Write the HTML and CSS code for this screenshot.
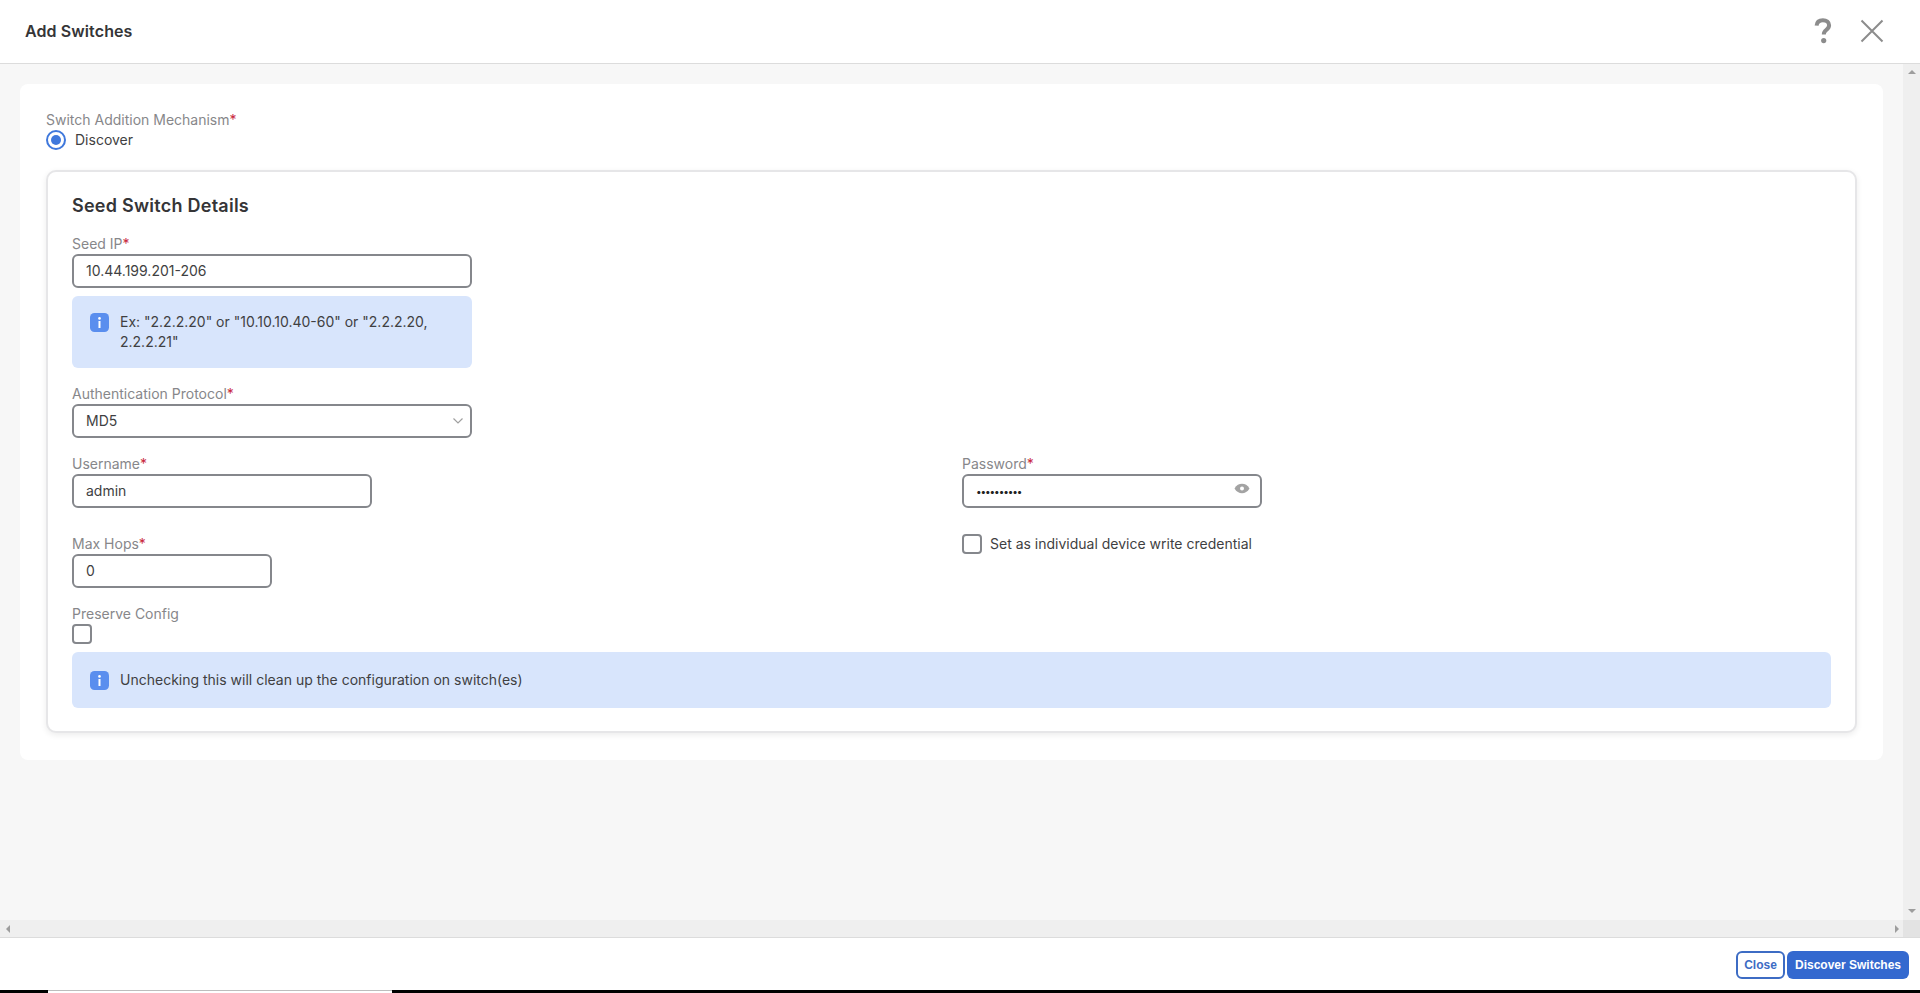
FILE: index.html
```html
<!DOCTYPE html>
<html lang="en">
<head>
<meta charset="utf-8">
<title>Add Switches</title>
<link rel="stylesheet" href="styles.css">
</head>
<body>
<div class="app">
  <header class="header">
    <h1 class="title">Add Switches</h1>
    <div class="header-icons">
      <svg class="icon-help" width="18" height="26" viewBox="0 0 18 26"><path d="M2.600 7.600C2.900 3.900 5.500 2.200 8.900 2.200c3.600 0 6.200 2 6.200 5.100 0 2.400-1.300 3.600-3 4.800-1.500 1.100-2.300 2-2.300 4.300" fill="none" stroke="#8c8c8c" stroke-width="4"/><circle cx="9.700" cy="22.600" r="2.600" fill="#8c8c8c"/></svg>
      <svg class="icon-close" width="24" height="24" viewBox="0 0 24 24"><path d="M1.500 1.500l21 21M22.500 1.500l-21 21" fill="none" stroke="#8c8c8c" stroke-width="2"/></svg>
    </div>
  </header>

  <div class="viewport">
    <main class="content">
      <section class="panel">
        <div class="label">Switch Addition Mechanism<span class="req">*</span></div>
        <div class="radio-row">
          <span class="radio"><span class="radio-dot"></span></span>
          <span class="radio-text">Discover</span>
        </div>

        <section class="card">
          <h2 class="card-title">Seed Switch Details</h2>

          <div class="label">Seed IP<span class="req">*</span></div>
          <div class="input w-400">10.44.199.201-206</div>
          <div class="info info-narrow">
            <svg class="info-icon" width="19" height="19" viewBox="0 0 19 19"><rect width="19" height="19" rx="4.500" fill="#5a8eee"/><circle cx="9.500" cy="5.400" r="1.300" fill="#fff"/><rect x="8.500" y="8" width="2" height="7" fill="#fff"/></svg>
            <span class="info-text">Ex: "2.2.2.20" or "10.10.10.40-60" or "2.2.2.20, 2.2.2.21"</span>
          </div>

          <div class="label gap-16">Authentication Protocol<span class="req">*</span></div>
          <div class="input select w-400">
            <span>MD5</span>
            <svg width="12" height="8" viewBox="0 0 12 8"><path d="M1.500 1.500l4.500 4.500 4.500-4.500" fill="none" stroke="#a0a0a0" stroke-width="1.200"/></svg>
          </div>

          <div class="grid">
            <div class="field">
              <div class="label">Username<span class="req">*</span></div>
              <div class="input w-300">admin</div>
            </div>
            <div class="field">
              <div class="label">Password<span class="req">*</span></div>
              <div class="input password w-300">
                <span class="dots">••••••••••</span>
                <svg width="16" height="11" viewBox="0 0 16 11"><path d="M0.500 5.500C2.500 2.200 5 .8 8 .8s5.500 1.400 7.500 4.700C13.500 8.800 11 10.200 8 10.200S2.500 8.800.5 5.500z" fill="#a3a3a3"/><circle cx="8" cy="5.500" r="2" fill="#fff"/></svg>
              </div>
            </div>
            <div class="field">
              <div class="label">Max Hops<span class="req">*</span></div>
              <div class="input w-200">0</div>
            </div>
            <div class="check-row">
              <span class="check"></span>
              <span class="check-text">Set as individual device write credential</span>
            </div>
          </div>

          <div class="label gap-16">Preserve Config</div>
          <span class="check check-block"></span>
          <div class="info info-wide">
            <svg class="info-icon" width="19" height="19" viewBox="0 0 19 19"><rect width="19" height="19" rx="4.500" fill="#5a8eee"/><circle cx="9.500" cy="5.400" r="1.300" fill="#fff"/><rect x="8.500" y="8" width="2" height="7" fill="#fff"/></svg>
            <span class="info-text">Unchecking this will clean up the configuration on switch(es)</span>
          </div>
        </section>
      </section>
    </main>
    <div class="vscroll">
      <span class="arrow-up"></span>
      <span class="arrow-down"></span>
    </div>
  </div>

  <div class="hscroll">
    <div class="hscroll-track">
      <span class="arrow-left"></span>
      <span class="arrow-right"></span>
    </div>
    <div class="corner"></div>
  </div>

  <footer class="footer">
    <button class="btn btn-outline" type="button">Close</button>
    <button class="btn btn-primary" type="button">Discover Switches</button>
  </footer>

  <div class="taskbar">
    <span class="task-black task-start"></span>
    <span class="task-tab"></span>
    <span class="task-black task-end"></span>
  </div>
</div>
</body>
</html>
```

FILE: styles.css
```css
* { box-sizing: border-box; }
html, body { margin: 0; padding: 0; height: 100%; overflow: hidden; }
body { font-family: Inter, "Liberation Sans", sans-serif; font-size: 14px; color: #3f3f42; background: #fff; }

.app { display: flex; flex-direction: column; height: 993px; }

.header { height: 64px; flex: none; display: flex; align-items: center; justify-content: space-between; padding: 0 36px 2px 25px; border-bottom: 1px solid #dcdcdc; background: #fff; }
.title { margin: 0; font-size: 16px; line-height: 22px; font-weight: 600; letter-spacing: .1px; color: #353537; }
.header-icons { display: flex; align-items: center; gap: 28px; }
.icon-help { display: block; }
.icon-close { display: block; }

.viewport { flex: 1; min-height: 0; display: flex; background: #f7f7f7; }
.content { flex: 1; min-width: 0; padding: 20px 20px 0; }
.panel { background: #fff; border-radius: 8px; padding: 26px 26px 27px; height: 676px; }

.label { font-size: 14px; line-height: 20px; color: #87878a; }
.req { color: #c8283c; }
.gap-16 { margin-top: 16px; }

.radio-row { display: flex; align-items: center; gap: 9px; height: 20px; }
.radio { width: 20px; height: 20px; border-radius: 50%; border: 2px solid #3f78dc; display: flex; align-items: center; justify-content: center; }
.radio-dot { width: 10px; height: 10px; border-radius: 50%; background: #3f78dc; }
.radio-text { line-height: 20px; color: #3f3f42; }

.card { margin-top: 20px; height: 563px; border: 2px solid #e6e6e8; border-radius: 10px; padding: 23px 24px 0 24px; box-shadow: 0 2px 6px rgba(0, 0, 0, .08); background: #fff; }
.card-title { margin: 0 0 17px; font-size: 18px; line-height: 22px; font-weight: 600; letter-spacing: .25px; color: #353537; }

.input { height: 34px; border: 2px solid #85878c; border-radius: 6px; padding: 0 12px; font-size: 14px; line-height: 30px; color: #3f3f42; background: #fff; }
.w-400 { width: 400px; }
.w-300 { width: 300px; }
.w-200 { width: 200px; }
.select, .password { display: flex; align-items: center; justify-content: space-between; }
.select { padding-right: 6px; }
.password { padding-right: 10px; }
.password svg { margin-top: -6px; }
.dots { font-size: 10px; letter-spacing: -1.100px; color: #222; }

.info { display: flex; background: #d8e5fc; border-radius: 6px; }
.info-icon { flex: none; margin-top: 1px; }
.info-text { line-height: 20px; color: #3f3f42; }
.info-narrow { width: 400px; height: 72px; margin-top: 8px; padding: 16px 18px; gap: 11px; }
.info-wide { height: 56px; margin-top: 8px; padding: 18px; gap: 11px; }

.grid { display: grid; grid-template-columns: 890px 1fr; row-gap: 26px; margin-top: 16px; }
.check-row { display: flex; align-items: center; gap: 8px; height: 20px; }
.check { width: 20px; height: 20px; flex: none; border: 2px solid #85878c; border-radius: 4px; background: #fff; }
.check-block { display: block; }
.check-text { line-height: 20px; color: #3f3f42; }

.vscroll { width: 17px; flex: none; background: #efefef; display: flex; flex-direction: column; justify-content: space-between; align-items: center; padding: 6px 0 7px; }
.arrow-up { width: 0; height: 0; border: 4px solid transparent; border-top: 0; border-bottom: 4px solid #9d9d9d; }
.arrow-down { width: 0; height: 0; border: 4px solid transparent; border-bottom: 0; border-top: 4px solid #9d9d9d; }

.hscroll { flex: none; height: 17px; display: flex; }
.hscroll-track { flex: 1; background: #efefef; display: flex; justify-content: space-between; align-items: center; padding: 0 4px 0 6px; }
.arrow-left { width: 0; height: 0; border: 4px solid transparent; border-left: 0; border-right: 4px solid #9d9d9d; }
.arrow-right { width: 0; height: 0; border: 4px solid transparent; border-right: 0; border-left: 4px solid #9d9d9d; }
.corner { width: 17px; background: #e3e3e3; }

.footer { flex: none; height: 53px; display: flex; justify-content: flex-end; align-items: flex-start; gap: 2px; padding: 13px 11px 0 0; border-top: 1px solid #dcdcdc; background: #fff; }
.btn { height: 28px; border-radius: 6px; font-family: "Liberation Sans", Arial, sans-serif; font-size: 12px; font-weight: 700; padding: 0; cursor: pointer; }
.btn-outline { width: 49px; background: #fff; color: #3d6cc4; border: 2px solid #3d6cc4; }
.btn-primary { width: 122px; background: #3469cf; color: #fff; border: 0; }

.taskbar { flex: none; height: 3px; display: flex; background: #000; }
.task-start { width: 48px; background: #000; }
.task-tab { width: 344px; background: #fff; border-top: 1px solid #bdbdbd; }
.task-end { flex: 1; background: #000; }
```
